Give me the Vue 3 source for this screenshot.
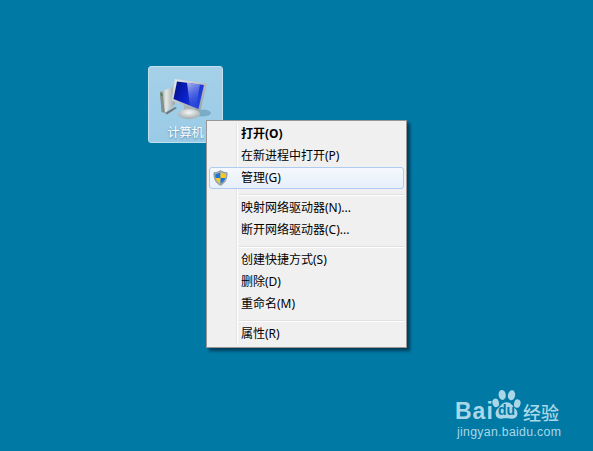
<template>
  <div class="desktop">
    <div class="computer">
      <svg class="computer-icon" width="52" height="42" viewBox="160 78 52 42">
        <defs>
          <linearGradient id="tower" x1="0" y1="0" x2="1" y2="0">
            <stop offset="0" stop-color="#7d8882" />
            <stop offset="0.4" stop-color="#e6e9e7" />
            <stop offset="1" stop-color="#98a2a5" />
          </linearGradient>
          <linearGradient id="screen" x1="0" y1="0" x2="1" y2="0.4">
            <stop offset="0" stop-color="#000e7c" />
            <stop offset="0.5" stop-color="#0a1fc8" />
            <stop offset="1" stop-color="#2444dc" />
          </linearGradient>
          <linearGradient id="bezel" x1="0" y1="0" x2="1" y2="1">
            <stop offset="0" stop-color="#e8ecee" />
            <stop offset="1" stop-color="#8f999e" />
          </linearGradient>
          <linearGradient id="glare" x1="0" y1="0" x2="0.4" y2="1">
            <stop offset="0" stop-color="#c3cff5" stop-opacity="0.9" />
            <stop offset="1" stop-color="#5a74ea" stop-opacity="0.15" />
          </linearGradient>
          <radialGradient id="base" cx="0.5" cy="0.35" r="0.65">
            <stop offset="0" stop-color="#f5f7f7" />
            <stop offset="1" stop-color="#a0a9ac" />
          </radialGradient>
        </defs>
        <ellipse cx="202" cy="113" rx="9" ry="3.500" fill="#5f90aa" opacity="0.55" />
        <path d="M160 92 L173 87 L175 104 L165 113 L162 112 Z" fill="url(#tower)" />
        <path d="M160 92 L162.500 92.500 L165 113 L161.500 112 Z" fill="#838f8a" />
        <path d="M160.500 93 L162.500 93.500 L162.800 96.500 L160.800 96 Z" fill="#4f8a5e" />
        <path d="M165 113 L175 107 L177 108 L167 114.500 Z" fill="#737b7f" />
        <path d="M175 79 L207 83.500 L200 112 L171.500 100.500 Z" fill="url(#bezel)" />
        <path d="M177 81.500 L204 85 L198.500 109 L173.500 99 Z" fill="url(#screen)" />
        <path d="M187 82.800 L200 84.500 L196 108 L190 105.500 Z" fill="url(#glare)" />
        <path d="M184 104 L195 108.500 L194 112 L184 110 Z" fill="#aab3b6" />
        <ellipse cx="189" cy="114" rx="11" ry="5" fill="url(#base)" />
      </svg>
      <span class="computer-label">计算机</span>
    </div>

    <div class="menu">
      <template v-for="(group, i) in groups" :key="i">
        <div v-if="i > 0" class="separator"></div>
        <div
          v-for="item in group"
          :key="item.label"
          class="item"
          :class="{ bold: item.bold, active: item.active }"
        >
          <svg v-if="item.active" class="shield" width="15" height="16" viewBox="0 0 16 17">
            <path d="M8 .6 C10 2 12.400 2.700 15 2.800 C15.400 9 13 13.800 8 16.400 C3 13.800 .6 9 1 2.800 C3.600 2.700 6 2 8 .6 Z" fill="#a4afb5" stroke="#76858f" stroke-width=".7" />
            <path d="M8 2.400 L8 8.500 L2.800 8.500 C2.500 6.800 2.500 5.500 2.600 4.200 C4.600 4 6.400 3.400 8 2.400 Z" fill="#1b74d8" />
            <path d="M8 2.400 C9.600 3.400 11.400 4 13.400 4.200 C13.500 5.500 13.500 6.800 13.200 8.500 L8 8.500 Z" fill="#f8c91e" />
            <path d="M2.800 8.500 L8 8.500 L8 14.500 C5.300 13 3.500 11 2.800 8.500 Z" fill="#f8c91e" />
            <path d="M8 8.500 L13.200 8.500 C12.500 11 10.700 13 8 14.500 Z" fill="#1b74d8" />
          </svg>
          <span class="item-label">{{ item.label }}</span>
        </div>
      </template>
    </div>

    <div class="watermark">
      <div class="logo-row">
        <span class="bai">Bai</span>
        <span class="paw">
          <svg width="33" height="34" viewBox="0 0 46 44">
            <ellipse cx="8" cy="19" rx="4.500" ry="6" fill="#a9d7e8" transform="rotate(-15 8 19)" />
            <ellipse cx="17" cy="8" rx="5" ry="7" fill="#a9d7e8" transform="rotate(-8 17 8)" />
            <ellipse cx="30" cy="8.500" rx="5" ry="7" fill="#a9d7e8" transform="rotate(10 30 8.500)" />
            <ellipse cx="38" cy="20" rx="4.500" ry="6" fill="#a9d7e8" transform="rotate(15 38 20)" />
            <path d="M23 18 C29 18 32 24 36 28 C41 34 37 42 30 41 C26 40.500 20 40.500 16 41 C9 42 5 34 10 28 C14 24 17 18 23 18 Z" fill="#a9d7e8" />
          </svg>
          <span class="du">du</span>
        </span>
        <span class="jingyan">经验</span>
      </div>
      <div class="domain">jingyan.baidu.com</div>
    </div>
  </div>
</template>

<script setup>
const groups = [
  [
    { label: '打开(O)', bold: true },
    { label: '在新进程中打开(P)' },
    { label: '管理(G)', active: true }
  ],
  [
    { label: '映射网络驱动器(N)...' },
    { label: '断开网络驱动器(C)...' }
  ],
  [
    { label: '创建快捷方式(S)' },
    { label: '删除(D)' },
    { label: '重命名(M)' }
  ],
  [
    { label: '属性(R)' }
  ]
]
</script>

<style>
html, body {
  margin: 0;
  background: #007aa5;
}
</style>

<style scoped>
.desktop {
  position: relative;
  width: 593px;
  height: 451px;
  overflow: hidden;
  background: #007aa5;
  font-family: "Noto Sans", "Noto Sans CJK SC", sans-serif;
}

.computer {
  position: absolute;
  left: 148px;
  top: 66px;
  width: 73px;
  height: 75px;
  border: 1px solid #c3e0ef;
  border-radius: 3px;
  background: linear-gradient(180deg, #a5d0e8 0%, #9acbe6 100%);
  display: flex;
  flex-direction: column;
  align-items: center;
}

.computer-icon {
  margin-top: 11px;
}

.computer-label {
  font-size: 12px;
  line-height: 16px;
  margin-top: 5px;
  color: #fff;
  text-shadow: 0 1px 2px rgba(0, 50, 90, 0.45);
}

.menu {
  position: absolute;
  left: 206px;
  top: 120px;
  width: 195px;
  padding: 2px;
  border: 1px solid #979797;
  background: #f0f0f0;
  box-shadow: 3px 3px 3px rgba(0, 20, 40, 0.6);
}

/* gutter line between icons and labels */
.menu::before {
  content: "";
  position: absolute;
  left: 29px;
  top: 2px;
  bottom: 2px;
  width: 1px;
  background: #e2e3e3;
  box-shadow: 1px 0 0 #fff;
}

.item {
  position: relative;
  height: 22px;
  box-sizing: border-box;
  display: flex;
  align-items: center;
  padding-left: 31px;
  border: 1px solid transparent;
  border-radius: 3px;
  font-size: 12px;
  color: #000;
}

.item.bold {
  font-weight: 700;
}

.item.active {
  border-color: #aeccf0;
  background: linear-gradient(180deg, #f5f9fe 0%, #e6eff9 100%);
}

.shield {
  position: absolute;
  left: 3px;
  top: 2px;
}

.item-label {
  line-height: 20px;
}

.separator {
  position: relative;
  height: 1px;
  margin: 5px 0 1px 30px;
  background: #e0e0e0;
  border-bottom: 1px solid #fff;
}

.watermark {
  position: absolute;
  left: 455px;
  top: 388px;
  width: 120px;
  color: #a9d7e8;
}

.logo-row {
  display: flex;
  align-items: flex-end;
  height: 34px;
}

.bai {
  font-family: "Liberation Sans", sans-serif;
  font-size: 23px;
  font-weight: 700;
  line-height: 26px;
  letter-spacing: 1px;
  width: 35px;
  margin-bottom: -2px;
}

.paw {
  position: relative;
  width: 33px;
  height: 34px;
}

.paw svg {
  display: block;
}

.du {
  position: absolute;
  left: 8px;
  top: 14px;
  font-family: "Liberation Sans", sans-serif;
  font-size: 14px;
  font-weight: 700;
  line-height: 16px;
  color: #007aa5;
}

.jingyan {
  font-size: 18px;
  line-height: 20px;
  margin-bottom: -1px;
  font-weight: 500;
  white-space: nowrap;
}

.domain {
  font-family: "Liberation Sans", sans-serif;
  font-size: 12.300px;
  line-height: 15px;
  margin-top: 3px;
  margin-left: 2px;
  letter-spacing: 0.3px;
  white-space: nowrap;
}
</style>
